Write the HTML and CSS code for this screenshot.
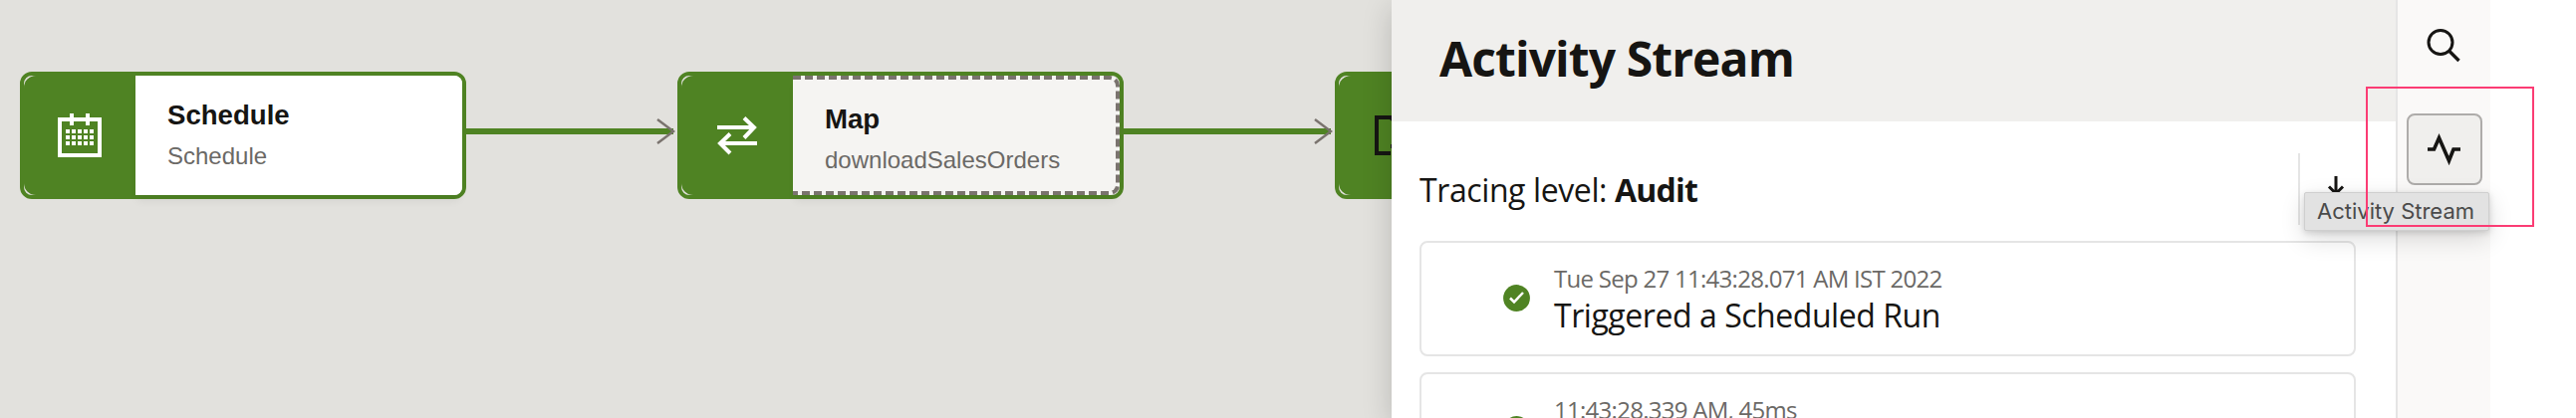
FILE: index.html
```html
<!DOCTYPE html>
<html lang="en">
<head>
<meta charset="utf-8">
<title>Activity Stream</title>
<link rel="stylesheet" href="styles.css">
</head>
<body>
<div class="app">
  <main class="canvas">
    <div class="flow">
      <section class="node">
        <div class="node-head">
          <svg class="node-icon" viewBox="0 0 48 48"><path d="M4 8h40v36H4z" fill="none" stroke="#fff" stroke-width="4"/><path d="M14 2h4v12h-4zM30 2h4v12h-4z" fill="#fff"/><path d="M10 20h28M10 26h28M10 32h28" stroke="#fff" stroke-width="4" stroke-dasharray="4 2"/></svg>
        </div>
        <div class="node-body">
          <h2 class="node-title">Schedule</h2>
          <p class="node-sub">Schedule</p>
        </div>
      </section>
      <svg class="link" viewBox="0 0 212 32"><path d="M0 16h208" stroke="#4f8323" stroke-width="6"/><path d="M192 4l16 12-16 12" fill="none" stroke="#7a736e" stroke-width="2.4"/></svg>
      <section class="node">
        <div class="node-head">
          <svg class="node-icon" viewBox="0 0 48 48"><path d="M4 16h38M31 6.500l10 9.500-10 10.500M44 32H6M17 22.500L7 32l10 10" fill="none" stroke="#fff" stroke-width="4"/></svg>
        </div>
        <div class="node-body selected">
          <h2 class="node-title">Map</h2>
          <p class="node-sub">downloadSalesOrders</p>
        </div>
      </section>
      <svg class="link" viewBox="0 0 212 32"><path d="M0 16h208" stroke="#4f8323" stroke-width="6"/><path d="M192 4l16 12-16 12" fill="none" stroke="#7a736e" stroke-width="2.4"/></svg>
      <section class="node">
        <div class="node-head">
          <svg class="node-icon" viewBox="0 0 48 48"><path d="M20 42H6V6h14l12 12" fill="none" stroke="#161513" stroke-width="4"/><path d="M20 33h4v4h-4z" fill="#161513"/></svg>
        </div>
        <div class="node-body"></div>
      </section>
    </div>
  </main>
  <aside class="panel">
    <header class="panel-header"><h1 class="panel-title">Activity Stream</h1></header>
    <div class="toolbar">
      <p class="tracing">Tracing level: <b>Audit</b></p>
      <div class="tools">
        <svg class="download" viewBox="0 0 24 32"><path d="M12 2v18M5 12.500l7 7 7-7" fill="none" stroke="#161513" stroke-width="3"/></svg>
      </div>
    </div>
    <div class="events">
      <article class="event">
        <svg class="check" viewBox="0 0 27 27"><circle cx="13.500" cy="13.500" r="13.400" fill="#4f8323"/><path d="M7 13.500l4 4 9-9.500" fill="none" stroke="#fff" stroke-width="2.500"/></svg>
        <div>
          <p class="event-time">Tue Sep 27 11:43:28.071 AM IST 2022</p>
          <p class="event-name">Triggered a Scheduled Run</p>
        </div>
      </article>
      <article class="event">
        <svg class="check" viewBox="0 0 27 27"><circle cx="13.500" cy="13.500" r="13.400" fill="#4f8323"/><path d="M7 13.500l4 4 9-9.500" fill="none" stroke="#fff" stroke-width="2.500"/></svg>
        <div>
          <p class="event-time">11:43:28.339 AM, 45ms</p>
        </div>
      </article>
    </div>
  </aside>
  <nav class="rail">
    <button class="rail-btn" aria-label="Search"><svg class="rail-icon" viewBox="0 0 40 40"><circle cx="16" cy="16.500" r="12" fill="none" stroke="#161513" stroke-width="3"/><path d="M24.500 25l10 10" stroke="#161513" stroke-width="3.400"/></svg></button>
    <button class="rail-btn active" aria-label="Activity Stream"><svg class="rail-icon" viewBox="0 0 40 40"><path d="M3 20h6.500l5-11.500 10 23 4.500-11.500H36" fill="none" stroke="#161513" stroke-width="3.600"/></svg></button>
    <span class="tooltip">Activity Stream</span>
    <span class="highlight"></span>
  </nav>
</div>
</body>
</html>
```

FILE: styles.css
```css
* { box-sizing: border-box; }
body { margin: 0; background: #fff; color: #161513; font-family: "Open Sans", sans-serif; }
h1, h2, p { margin: 0; }
svg { display: block; flex: none; }
.app { display: flex; width: 2586px; height: 420px; overflow: hidden; }

.canvas { width: 1397px; flex: none; background: #e2e1dd; overflow: hidden; }
.flow { display: flex; align-items: flex-start; width: max-content; padding: 72px 0 0 20px; }
.node { display: flex; width: 448px; height: 128px; border: 4px solid #4f8323; border-radius: 12px; flex: none; }
.node-head { width: 112px; flex: none; display: grid; place-items: center; background: #4f8323; border-radius: 12px 0 0 12px; }
.node-icon { width: 48px; height: 48px; }
.node-body { flex: 1; padding: 22px 0 0 32px; background: #fff; border-radius: 0 8px 8px 0; box-shadow: 0 8px 8px -2px rgba(22, 21, 19, 0.06); font-family: "Liberation Sans", Arial, sans-serif; }
.node-body.selected { background: #f5f4f2; border: 4px dashed #7a736e; border-left: 0; border-radius: 0 10px 10px 0; }
.node-title { font-size: 27.6px; line-height: 40px; font-weight: 700; margin: -2px 0 1px; }
.node-sub { font-size: 24px; line-height: 40px; color: #6b6966; }
.link { width: 212px; height: 32px; margin-top: 44px; }

.panel { width: 1008px; flex: none; background: #fff; box-shadow: 0 8px 28px rgba(0, 0, 0, 0.18); position: relative; }
.panel-header { height: 122px; padding: 26px 0 0 48px; background: #f0efed; }
.panel-title { font-size: 48px; line-height: 66px; font-weight: 700; letter-spacing: -0.9px; }
.toolbar { display: flex; justify-content: space-between; height: 120px; padding: 32px 0 0 28px; }
.tracing { font-size: 32px; line-height: 44px; padding-top: 15px; letter-spacing: -0.4px; }
.tracing b { letter-spacing: -0.8px; }
.tools { width: 98px; height: 72px; border-left: 2px solid #e5e5e5; padding: 21px 0 0 24px; }
.download { width: 24px; height: 32px; }
.events { display: flex; flex-direction: column; gap: 16px; padding: 0 40px 0 28px; }
.event { display: flex; flex: none; height: 116px; padding: 19px 0 0 82px; gap: 24px; border: 2px solid #e5e5e5; border-radius: 8px; }
.check { width: 27px; height: 27px; margin-top: 23px; }
.event-time { font-size: 24px; line-height: 34px; color: #6b6966; letter-spacing: -0.72px; }
.event-name { font-size: 32px; line-height: 44px; margin-top: -2px; letter-spacing: -0.45px; }

.rail { position: relative; width: 95px; flex: none; display: flex; flex-direction: column; align-items: center; gap: 32px; padding-top: 10px; background: #faf9f8; border-left: 2px solid #e5e5e5; }
.rail-btn { width: 76px; height: 72px; display: grid; place-items: center; padding: 0; border: 2px solid transparent; border-radius: 8px; background: none; }
.rail-btn.active { background: #f0efed; border-color: #aeacaa; }
.rail-icon { width: 40px; height: 40px; }
.tooltip { position: absolute; top: 193px; right: 1px; width: 186px; height: 39px; padding-left: 12px; background: #e2e2e2; border: 1px solid #cfcfcf; border-radius: 2px; box-shadow: 0 8px 24px rgba(0, 0, 0, 0.14), 0 2px 6px rgba(0, 0, 0, 0.14); color: #4a4a4a; font: 22px/37px Inter, sans-serif; white-space: nowrap; }
.highlight { position: absolute; left: -32px; top: 87px; width: 169px; height: 141px; border: 2px solid #fb3c74; }
```
